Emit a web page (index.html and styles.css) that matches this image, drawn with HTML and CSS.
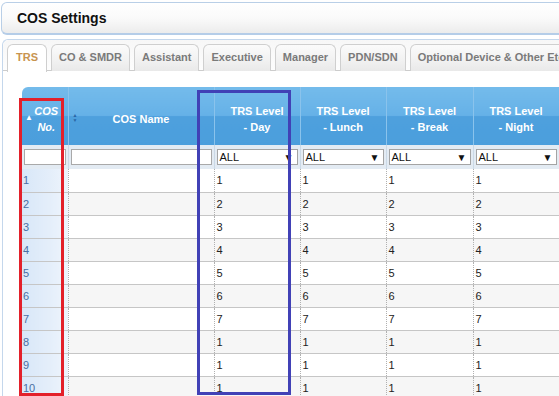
FILE: index.html
```html
<!DOCTYPE html>
<html>
<head>
<meta charset="utf-8">
<link rel="stylesheet" href="styles.css">
</head>
<body>
<div class="page">
  <div class="title">COS Settings</div>
  <div class="panel">
    <div class="tabs">
      <div class="tab active">TRS</div>
      <div class="tab">CO &amp; SMDR</div>
      <div class="tab">Assistant</div>
      <div class="tab">Executive</div>
      <div class="tab">Manager</div>
      <div class="tab">PDN/SDN</div>
      <div class="tab">Optional Device &amp; Other Etc</div>
    </div>
    <div class="content">
      <table class="grid">
        <colgroup>
          <col class="c1"><col class="c2"><col class="c3"><col class="c3"><col class="c4"><col class="c3"><col class="c3">
        </colgroup>
        <thead>
          <tr class="head">
            <th class="first"><span class="asc">▲</span><span class="it">COS<br>No.</span></th>
            <th><span class="both"><span>▲</span><span>▼</span></span>COS Name</th>
            <th>TRS Level<br>- Day</th>
            <th>TRS Level<br>- Lunch</th>
            <th>TRS Level<br>- Break</th>
            <th>TRS Level<br>- Night</th>
            <th>TRS Level</th>
          </tr>
          <tr class="filter">
            <td><div class="inp"></div></td>
            <td><div class="inp"></div></td>
            <td><div class="sel"><span>ALL</span><span class="arr">▼</span></div></td>
            <td><div class="sel"><span>ALL</span><span class="arr">▼</span></div></td>
            <td><div class="sel"><span>ALL</span><span class="arr">▼</span></div></td>
            <td><div class="sel"><span>ALL</span><span class="arr">▼</span></div></td>
            <td><div class="sel"><span>ALL</span><span class="arr">▼</span></div></td>
          </tr>
        </thead>
        <tbody>
          <tr><td class="no">1</td><td></td><td>1</td><td>1</td><td>1</td><td>1</td><td>1</td></tr>
          <tr><td class="no">2</td><td></td><td>2</td><td>2</td><td>2</td><td>2</td><td>2</td></tr>
          <tr><td class="no">3</td><td></td><td>3</td><td>3</td><td>3</td><td>3</td><td>3</td></tr>
          <tr><td class="no">4</td><td></td><td>4</td><td>4</td><td>4</td><td>4</td><td>4</td></tr>
          <tr><td class="no">5</td><td></td><td>5</td><td>5</td><td>5</td><td>5</td><td>5</td></tr>
          <tr><td class="no">6</td><td></td><td>6</td><td>6</td><td>6</td><td>6</td><td>6</td></tr>
          <tr><td class="no">7</td><td></td><td>7</td><td>7</td><td>7</td><td>7</td><td>7</td></tr>
          <tr><td class="no">8</td><td></td><td>1</td><td>1</td><td>1</td><td>1</td><td>1</td></tr>
          <tr><td class="no">9</td><td></td><td>1</td><td>1</td><td>1</td><td>1</td><td>1</td></tr>
          <tr><td class="no">10</td><td></td><td>1</td><td>1</td><td>1</td><td>1</td><td>1</td></tr>
        </tbody>
      </table>
    </div>
  </div>
  <div class="mark red"></div>
  <div class="mark blue"></div>
</div>
</body>
</html>
```

FILE: styles.css
```css
html, body {
  margin: 0;
  padding: 0;
  background: #ffffff;
}
body {
  font-family: "Liberation Sans", Arial, sans-serif;
  font-size: 11px;
  color: #222;
}
.page {
  position: relative;
  width: 559px;
  height: 396px;
  overflow: hidden;
}
.title {
  margin: 2px -20px 0 1px;
  height: 30px;
  line-height: 30px;
  padding-left: 15px;
  border: 1px solid #b9cfe7;
  border-bottom: 2px solid #b5cde8;
  border-radius: 6px;
  background: linear-gradient(to bottom, #ffffff 0%, #fafafa 50%, #ececec 100%);
  font-weight: bold;
  font-size: 14px;
  color: #111;
}
.panel {
  margin: 4px -20px 0 2px;
  border: 1px solid #c4d7ec;
  border-right: none;
  border-radius: 6px 0 0 0;
  background: #fff;
  height: 400px;
}
.tabs {
  display: flex;
  gap: 4px;
  padding: 4px 0 0 4px;
  background: linear-gradient(to bottom, #f7f7f7, #fdfdfd);
  border-bottom: 1px solid #cccccc;
  border-radius: 6px 0 0 0;
  height: 26px;
}
.tab {
  height: 26px;
  line-height: 25px;
  padding: 0 7px;
  border: 1px solid #cfcfcf;
  border-bottom: none;
  border-radius: 6px 6px 0 0;
  background: linear-gradient(to bottom, #fbfbfb 0%, #f1f1f1 60%, #e9e9e9 100%);
  font-weight: bold;
  font-size: 11px;
  color: #7a7a7a;
  white-space: nowrap;
}
.tab.active {
  background: #ffffff;
  color: #c8944f;
  height: 27px;
  margin-bottom: -1px;
  padding: 0 8px;
}
.content {
  padding: 16px 0 0 19px;
}
.grid {
  border-collapse: collapse;
  table-layout: fixed;
  width: 617px;
}
.c1 { width: 46px; }
.c2 { width: 146px; }
.c3 { width: 86px; }
.c4 { width: 87px; }
.head th {
  height: 58px;
  padding: 5px 0 0 0;
  box-sizing: border-box;
  color: #fff;
  font-weight: bold;
  font-size: 11px;
  line-height: 16px;
  text-align: center;
  background: linear-gradient(to bottom, #74bbeb 0%, #65b1e7 49%, #4ea0dd 51%, #4b9edc 100%);
  border-left: 1px solid #8ac3ec;
  position: relative;
}
.head th.first {
  border-left: none;
  border-top-left-radius: 6px;
}
.it {
  font-style: italic;
  display: inline-block;
  padding-left: 3px;
}
.asc {
  position: absolute;
  left: 3px;
  top: 27px;
  font-size: 8px;
  line-height: 8px;
  color: #ffffff;
}
.both {
  position: absolute;
  left: 4px;
  top: 26px;
  display: flex;
  flex-direction: column;
  font-size: 5px;
  line-height: 5px;
  color: #2a66a6;
}
.filter td {
  height: 24px;
  padding: 0 2px;
  background: #e3ebf3;
  border-left: 1px solid #cbd9e6;
  vertical-align: middle;
}
.filter td:first-child { border-left: none; }
.inp {
  height: 16px;
  box-sizing: border-box;
  border: 1px solid #a9a9a9;
  background: #fff;
}
.sel {
  height: 16px;
  box-sizing: border-box;
  border: 1px solid #a4a4a4;
  background: #fff;
  display: flex;
  justify-content: space-between;
  align-items: center;
  padding: 0 3px 0 2px;
  font-size: 11px;
  color: #111;
}
.arr {
  font-size: 10px;
  color: #111;
}
tbody td {
  height: 23px;
  padding: 0 0 0 2px;
  border-bottom: 1px solid #c6c6c6;
  border-left: 1px dotted #b0b0b0;
  vertical-align: middle;
  font-size: 11px;
  color: #222;
  line-height: 14px;
  box-sizing: border-box;
  background: #ffffff;
}
tbody tr:nth-child(even) td {
  background: #f6f6f6;
}
tbody td.no,
tbody tr:nth-child(even) td.no {
  border-left: none;
  color: #4a6fa3;
  padding-left: 1px;
  background: linear-gradient(to right, #d8e7f8 0%, #e4eefa 60%, #eef4fc 100%);
}
.mark {
  position: absolute;
  box-sizing: border-box;
  border: 3px solid;
}
.red {
  left: 19px;
  top: 98px;
  width: 45px;
  height: 298px;
  border-color: #e3202a;
}
.blue {
  left: 197px;
  top: 90px;
  width: 94px;
  height: 305px;
  border-color: #4141b6;
}
```
